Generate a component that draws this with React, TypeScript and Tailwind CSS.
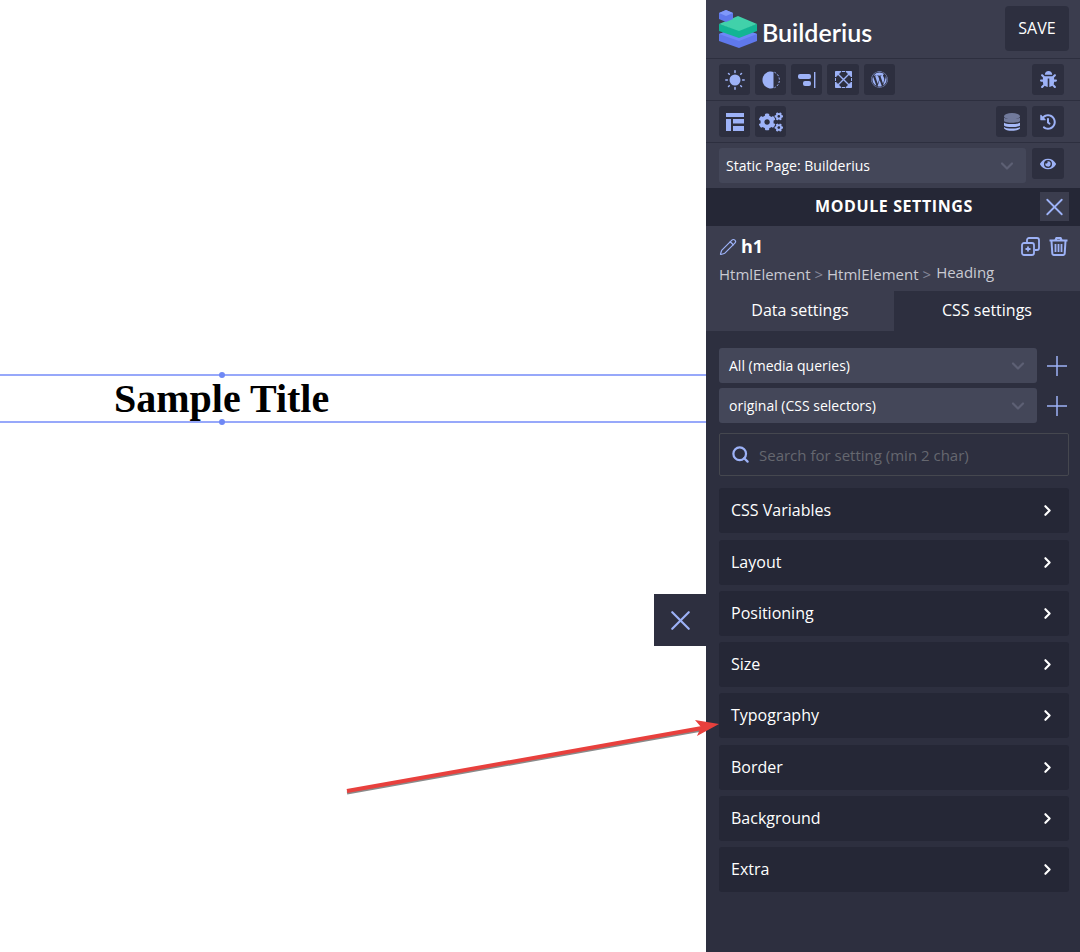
import { ReactNode } from "react";
import { FaBug, FaCogs, FaEye, FaHistory, FaWordpress } from "react-icons/fa";
import { ChevronDown, ChevronRight, Pencil, Search, X } from "lucide-react";

const sections = ["CSS Variables", "Layout", "Positioning", "Size", "Typography", "Border", "Background", "Extra"];

function ToolButton({ children, className = "w-[31px]" }: { children: ReactNode; className?: string }) {
  return (
    <button className={`${className} h-[31px] flex items-center justify-center rounded-[3px] bg-[#2d2f3f] text-[#9db2f7]`}>
      {children}
    </button>
  );
}

function Logo() {
  return (
    <svg width="39" height="39" viewBox="0 0 39 39" className="shrink-0">
      <path d="M0 24 L19 17 L38 24 L38 31 L20 38 L0 31 Z" fill="#5f78ec" />
      <path d="M0 24 L19 17 L38 24 L20 31 Z" fill="#6d88f7" />
      <path d="M0 14 L0 21 L20 28 L38 21 L38 14 L20 20 Z" fill="#12b594" />
      <path d="M0 14 L19 6 L38 14 L20 21 Z" fill="#41d1aa" />
      <path d="M0 3 L7 0 L14 3 L14 9 L7 12 L0 9 Z" fill="#5f78ec" />
      <path d="M0 3 L7 0 L14 3 L7 6 Z" fill="#7f98fa" />
    </svg>
  );
}

function SunIcon() {
  return (
    <svg width="20" height="20" viewBox="0 0 20 20" fill="none" stroke="#9db2f7" strokeWidth="1.5" strokeLinecap="round">
      <circle cx="10" cy="10" r="5.5" fill="#9db2f7" stroke="none" />
      <path d="M10 0.8 V2.4 M10 17.6 V19.2 M0.8 10 H2.4 M17.6 10 H19.2 M3.5 3.5 L4.3 4.3 M15.7 15.7 L16.5 16.5 M3.5 16.5 L4.3 15.7 M15.7 4.3 L16.5 3.5" />
    </svg>
  );
}

function ContrastIcon() {
  return (
    <svg width="18" height="18" viewBox="0 0 18 18" fill="none">
      <path d="M11.5 0.9 A8.5 8.5 0 1 0 11.5 17.1 Z" fill="#9db2f7" />
      <path d="M12.5 1.3 A8.5 8.5 0 0 1 12.5 16.7" stroke="#9db2f7" strokeWidth="1" strokeDasharray="2 1.5" />
    </svg>
  );
}

function AlignIcon() {
  return (
    <svg width="18" height="16" viewBox="0 0 18 16" fill="#9db2f7">
      <rect x="0" y="2" width="13" height="5" rx="2" />
      <rect x="5" y="9" width="8" height="5" rx="2" />
      <rect x="16" y="0" width="1.4" height="16" />
    </svg>
  );
}

function ExpandIcon() {
  return (
    <svg width="17" height="17" viewBox="0 0 17 17" fill="none" stroke="#9db2f7" strokeWidth="1">
      <path d="M7 0.5 H10 M7 16.5 H10 M0.5 7 V10 M16.5 7 V10" />
      <path d="M1 1 L16 16 M16 1 L1 16" strokeWidth="1.4" />
      <path d="M0.5 0.5 H6 L0.5 6 Z M16.5 0.5 H11 L16.5 6 Z M0.5 16.5 H6 L0.5 11 Z M16.5 16.5 H11 L16.5 11 Z" fill="#9db2f7" />
    </svg>
  );
}

function LayoutIcon() {
  return (
    <svg width="18" height="18" viewBox="0 0 18 18" fill="#9db2f7">
      <rect x="0" y="0" width="18" height="4" />
      <rect x="0" y="6" width="5" height="12" />
      <rect x="7" y="6" width="11" height="4.5" />
      <rect x="7" y="13" width="11" height="5" />
    </svg>
  );
}

function DatabaseIcon() {
  return (
    <svg width="16" height="18" viewBox="0 0 16 18">
      <ellipse cx="8" cy="3.2" rx="8" ry="3.2" fill="#717a9c" />
      <path d="M0 4.6 C1.5 6.6 14.5 6.6 16 4.6 V8 C14.5 10.4 1.5 10.4 0 8 Z" fill="#717a9c" />
      <path d="M0 9.4 C1.5 11.6 14.5 11.6 16 9.4 V12.6 C14.5 14.6 1.5 14.6 0 12.6 Z" fill="#a6b9f8" />
      <path d="M0 14 C1.5 16 14.5 16 16 14 V15.2 C14.5 18.6 1.5 18.6 0 15.2 Z" fill="#a6b9f8" />
    </svg>
  );
}

function CloneIcon() {
  return (
    <svg width="19" height="19" viewBox="0 0 19 19" fill="none" stroke="#9db2f7" strokeWidth="1.8">
      <rect x="1" y="6" width="12" height="12" rx="2" />
      <path d="M6 5 V3 A2 2 0 0 1 8 1 H16 A2 2 0 0 1 18 3 V11 A2 2 0 0 1 16 13 H14" />
      <path d="M7 9.5 V14.5 M4.5 12 H9.5" />
    </svg>
  );
}

function TrashIcon() {
  return (
    <svg width="19" height="19" viewBox="0 0 19 19" fill="none" stroke="#9db2f7">
      <path d="M0.5 3.5 H18.5 M6.5 3 L7.5 1 H11.5 L12.5 3" strokeWidth="2.2" />
      <path d="M2.5 4 L3.3 16.5 A1.6 1.6 0 0 0 5 18 H14 A1.6 1.6 0 0 0 15.7 16.5 L16.5 4" strokeWidth="2" />
      <path d="M6.5 7 V15 M9.5 7 V15 M12.5 7 V15" strokeWidth="1.8" />
    </svg>
  );
}

function PlusIcon() {
  return (
    <svg width="20" height="20" viewBox="0 0 20 20" stroke="#9db2f7" strokeWidth="1.5">
      <path d="M10 0 V20 M0 10 H20" />
    </svg>
  );
}

function FakeSelect({ label, className }: { label: string; className: string }) {
  return (
    <div className={`${className} h-[35px] flex items-center justify-between rounded-[3px] bg-[#444759] text-[14px] text-white`}>
      <span>{label}</span>
      <ChevronDown size={20} strokeWidth={2.6} className="text-[#5d6074]" />
    </div>
  );
}

export default function App() {
  return (
    <div className="relative flex h-[952px] w-[1080px] overflow-hidden bg-white font-['Open_Sans',sans-serif]">
      {/* canvas */}
      <div className="w-[706px] pt-[374px]">
        <div className="relative h-[49px] border-y-2 border-[#97a8fa] pl-[114px]">
          <span className="block font-['Liberation_Serif',serif] text-[40px] leading-[46px] font-bold text-black">Sample Title</span>
          <span className="absolute -top-[4px] left-[219px] h-[6px] w-[6px] rounded-full bg-[#6f88f5]" />
          <span className="absolute -bottom-[4px] left-[219px] h-[6px] w-[6px] rounded-full bg-[#6f88f5]" />
        </div>
      </div>

      {/* panel */}
      <div className="flex h-full w-[374px] flex-col bg-[#2d2f3f]">
        <div className="bg-[#3b3d4e]">
          <div className="flex h-[59px] items-start justify-between border-b border-[#2d2f3f] pr-[11px] pl-[13px]">
            <div className="flex items-start gap-[4px] pt-[10px]">
              <Logo />
              <span className="font-['Lato',sans-serif] mt-[6px] text-[25px] leading-[32px] font-semibold text-white">Builderius</span>
            </div>
            <button className="mt-[6px] h-[45px] w-[64px] rounded-[4px] bg-[#2d2f3f] pb-[2px] text-[16px] text-white">SAVE</button>
          </div>
          <div className="flex h-[42px] items-center justify-between border-b border-[#2d2f3f] pr-[16px] pl-[13px]">
            <div className="flex gap-[5px]">
              <ToolButton><SunIcon /></ToolButton>
              <ToolButton><ContrastIcon /></ToolButton>
              <ToolButton><AlignIcon /></ToolButton>
              <ToolButton className="w-[32px]"><ExpandIcon /></ToolButton>
              <ToolButton><FaWordpress size={17} /></ToolButton>
            </div>
            <ToolButton className="w-[32px]"><FaBug size={17} /></ToolButton>
          </div>
          <div className="flex h-[42px] items-center justify-between border-b border-[#2d2f3f] pr-[16px] pl-[13px]">
            <div className="flex gap-[5px]">
              <ToolButton><LayoutIcon /></ToolButton>
              <ToolButton><FaCogs size={24} /></ToolButton>
            </div>
            <div className="flex gap-[5px]">
              <ToolButton><DatabaseIcon /></ToolButton>
              <ToolButton className="w-[32px]"><FaHistory size={16} /></ToolButton>
            </div>
          </div>
          <div className="flex h-[45px] items-start gap-[6px] pt-[5px] pl-[13px]">
            <FakeSelect label="Static Page: Builderius" className="w-[307px] pr-[9px] pl-[7px]" />
            <ToolButton className="w-[32px]"><FaEye size={16} /></ToolButton>
          </div>
        </div>

        <div className="relative flex h-[38px] items-center justify-center bg-[#252736] pb-[2px] pl-[2px]">
          <span className="text-[16px] font-bold tracking-[0.6px] text-white">MODULE SETTINGS</span>
          <button className="absolute top-[4px] right-[11px] flex h-[29px] w-[29px] items-center justify-center bg-[#3b3d4e] text-[#9db2f7]">
            <X size={32} strokeWidth={1.5} />
          </button>
        </div>

        <div className="h-[65px] bg-[#3b3d4e] pr-[12px] pl-[13px]">
          <div className="flex h-[41px] items-center justify-between">
            <div className="flex items-center gap-[4px]">
              <Pencil size={18} strokeWidth={1.6} className="text-[#9db2f7]" />
              <span className="text-[18px] font-bold text-white">h1</span>
            </div>
            <div className="flex items-center gap-[9px]">
              <CloneIcon />
              <TrashIcon />
            </div>
          </div>
          <div className="-mt-[1px] flex items-center gap-[4px] text-[15px] leading-[16px] text-[#c9cad2]">
            <span>HtmlElement</span>
            <span className="text-[#858799]">&gt;</span>
            <span>HtmlElement</span>
            <span className="text-[#858799]">&gt;</span>
            <span className="-translate-y-[2px] pl-[1px]">Heading</span>
          </div>
        </div>

        <div className="flex h-[40px] text-[16px] text-white">
          <div className="flex w-[188px] items-center justify-center bg-[#3b3d4e] pb-[2px]">Data settings</div>
          <div className="flex flex-1 items-center justify-center pb-[2px]">CSS settings</div>
        </div>

        <div className="flex flex-col pt-[17px] pr-[11px] pl-[13px]">
          <div className="flex items-center gap-[10px]">
            <FakeSelect label="All (media queries)" className="w-[318px] pr-[9px] pl-[10px]" />
            <PlusIcon />
          </div>
          <div className="mt-[5px] flex items-center gap-[10px]">
            <FakeSelect label="original (CSS selectors)" className="w-[318px] pr-[9px] pl-[10px]" />
            <PlusIcon />
          </div>
          <div className="mt-[10px] flex h-[43px] w-[350px] items-center gap-[9px] rounded-[2px] border border-[#45474f] pl-[11px]">
            <Search size={19} strokeWidth={2.8} className="text-[#9db2f7]" />
            <span className="pt-[1px] text-[15px] text-[#65676f]">Search for setting (min 2 char)</span>
          </div>
          <div className="mt-[12.4px] flex w-[350px] flex-col gap-[6.25px]">
            {sections.map((name) => (
              <div key={name} className="flex h-[45px] items-center justify-between rounded-[3px] bg-[#252736] pr-[13px] pl-[12px] text-[16px] text-white">
                <span className="pb-[1px]">{name}</span>
                <ChevronRight size={17} strokeWidth={3} />
              </div>
            ))}
          </div>
        </div>
      </div>

      {/* panel toggle */}
      <button className="absolute top-[594px] left-[654px] flex h-[52px] w-[52px] items-center justify-center bg-[#2d2f3f] text-[#9db2f7]">
        <X size={33} strokeWidth={1.6} />
      </button>

      {/* annotation arrow */}
      <svg className="absolute top-0 left-0" width="1080" height="952" fill="none">
        <path d="M347 793 L702 730" stroke="#8a8a8a" strokeWidth="3" />
        <path d="M347 791 L702 728" stroke="#e8403d" strokeWidth="4" />
        <path d="M719 724 L695 720 L701 727 L697 736 Z" fill="#e8403d" />
      </svg>
    </div>
  );
}
